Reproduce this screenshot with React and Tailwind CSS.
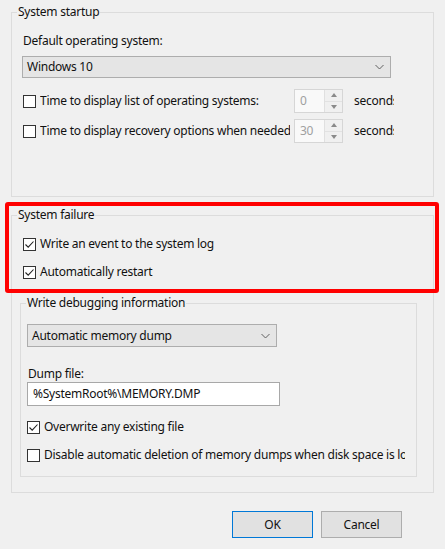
import React from "react";

const CheckBox = ({ checked }) => (
  <span className="flex h-[13px] w-[13px] shrink-0 items-center justify-center border border-[#333333] bg-white">
    {checked && (
      <svg width="11" height="11" viewBox="0 0 11 11">
        <path d="M1.5 5.5 L4.2 8.2 L9.5 2.5" fill="none" stroke="#222" strokeWidth="1.1" />
      </svg>
    )}
  </span>
);

const CheckRow = ({ checked, children, className = "" }) => (
  <div className={`flex h-[20px] items-center gap-[4px] ${className}`}>
    <CheckBox checked={checked} />
    <span className="whitespace-nowrap">{children}</span>
  </div>
);

const Chevron = () => (
  <svg width="9" height="6" viewBox="0 0 9 6">
    <path d="M0.5 1 L4.5 5 L8.5 1" fill="none" stroke="#606060" strokeWidth="1" />
  </svg>
);

const ComboBox = ({ value, width, className = "" }) => (
  <div
    className={`flex h-[22px] items-center justify-between border border-[#adadad] bg-[#e5e5e5] pl-[4px] pr-[6px] ${width} ${className}`}
  >
    <span>{value}</span>
    <Chevron />
  </div>
);

// disabled numeric up/down box
const Spinner = ({ value }) => (
  <div className="flex h-[24px] w-[49px] shrink-0 border border-[#d6d6d6] bg-[#f9f9f9]">
    <span className="flex-1 pl-[5px] leading-[22px] text-[#a0a0a0]">{value}</span>
    <div className="flex w-[18px] flex-col border-l border-[#e0e0e0] bg-[#f0f0f0]">
      <div className="flex flex-1 items-center justify-center border-b border-[#e2e2e2]">
        <svg width="6" height="4" viewBox="0 0 6 4">
          <path d="M0 4 L3 0 L6 4 Z" fill="#8a8a8a" />
        </svg>
      </div>
      <div className="flex flex-1 items-center justify-center">
        <svg width="6" height="4" viewBox="0 0 6 4">
          <path d="M0 0 L3 4 L6 0 Z" fill="#8a8a8a" />
        </svg>
      </div>
    </div>
  </div>
);

const TimeoutRow = ({ label, value, className = "" }) => (
  <div className={`flex h-[24px] items-center ${className}`}>
    <CheckBox />
    <span className="ml-[4px] w-[250px] overflow-hidden whitespace-nowrap">{label}</span>
    <span className="ml-[4px]">
      <Spinner value={value} />
    </span>
    <span className="ml-[11px] w-[40px] overflow-hidden whitespace-nowrap">seconds</span>
  </div>
);

const GroupBox = ({ title, className = "", legendClass = "ml-[5px]", children }) => (
  <fieldset className={`border border-[#dcdcdc] ${className}`}>
    <legend className={`px-[1px] leading-4 ${legendClass}`}>{title}</legend>
    {children}
  </fieldset>
);

export default function App() {
  return (
    <div
      className="relative h-[549px] w-[445px] overflow-hidden bg-[#f0f0f0] pt-[4px] text-[12px] tracking-[-0.25px] text-[#111]"
      style={{ fontFamily: '"Segoe UI", "Noto Sans", sans-serif' }}
    >
      <GroupBox title="System startup" className="ml-[11px] h-[193px] w-[423px]">
        <div className="pl-[10px]">
          <div className="mt-[13px] pl-[1px] leading-4">Default operating system:</div>
          <ComboBox value="Windows 10" width="w-[369px]" className="mt-[7px]" />
          <TimeoutRow label="Time to display list of operating systems:" value="0" className="ml-[1px] mt-[11px]" />
          <TimeoutRow label="Time to display recovery options when needed" value="30" className="ml-[1px] mt-[6px]" />
        </div>
      </GroupBox>

      <GroupBox title="System failure" className="ml-[11px] mt-[10px] w-[423px] pb-[15px]">
        <div className="pl-[11px]">
          <CheckRow checked className="mt-[11px]">Write an event to the system log</CheckRow>
          <CheckRow checked className="mt-[8px]">Automatically restart</CheckRow>
        </div>
        <div className="pl-[8px]">
          <GroupBox title="Write debugging information" className="mt-[13px] w-[397px] pb-[11px]">
            <div className="pl-[6px]">
              <ComboBox value="Automatic memory dump" width="w-[250px]" className="mt-[13px] h-[23px]" />
              <div className="mt-[19px] pl-[1px] leading-4">Dump file:</div>
              <div className="flex h-[24px] w-[253px] items-center border border-[#a8a8a8] bg-white pl-[5px]">
                %SystemRoot%\MEMORY.DMP
              </div>
              <CheckRow checked className="mt-[11px]">Overwrite any existing file</CheckRow>
              <div className="mt-[8px] w-[378px] overflow-hidden">
                <CheckRow>Disable automatic deletion of memory dumps when disk space is low</CheckRow>
              </div>
            </div>
          </GroupBox>
        </div>
      </GroupBox>

      <div className="mt-[18px] flex justify-end gap-[8px] pr-[43px]">
        <button className="h-[27px] w-[81px] border border-[#0078d7] bg-[#e1e1e1]">OK</button>
        <button className="h-[27px] w-[81px] border border-[#adadad] bg-[#e1e1e1]">Cancel</button>
      </div>

      {/* highlight around the failure section */}
      <div className="pointer-events-none absolute left-[5px] top-[202px] h-[91px] w-[434px] rounded-[3px] border-[4px] border-[#ff0000]" />
    </div>
  );
}
